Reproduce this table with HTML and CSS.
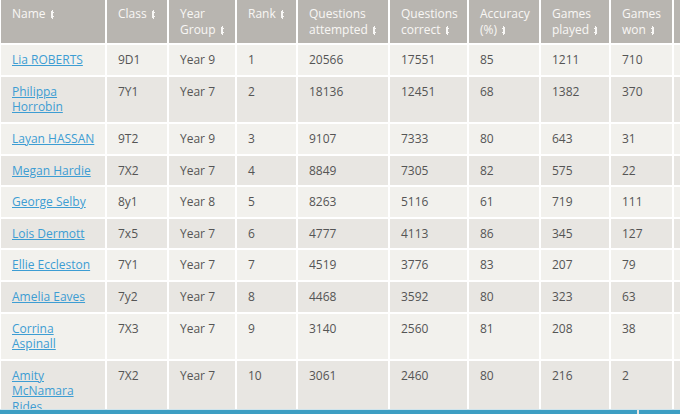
FILE: index.html
```html
<!DOCTYPE html>
<html lang="en">
<head>
<meta charset="utf-8">
<title>Leaderboard</title>
<link rel="stylesheet" href="styles.css">
</head>
<body>
<div class="wrap">
<table class="board">
  <colgroup>
    <col class="c1"><col class="c2"><col class="c3"><col class="c4"><col class="c5">
    <col class="c6"><col class="c7"><col class="c8"><col class="c9"><col class="c10">
  </colgroup>
  <thead>
    <tr>
      <th>Name <span class="sort"></span></th>
      <th>Class <span class="sort"></span></th>
      <th>Year Group <span class="sort"></span></th>
      <th>Rank <span class="sort"></span></th>
      <th>Questions attempted <span class="sort"></span></th>
      <th>Questions correct <span class="sort"></span></th>
      <th>Accuracy (%) <span class="sort"></span></th>
      <th>Games played <span class="sort"></span></th>
      <th>Games won <span class="sort"></span></th>
      <th></th>
    </tr>
  </thead>
  <tbody>
    <tr><td><a href="#">Lia ROBERTS</a></td><td>9D1</td><td>Year 9</td><td>1</td><td>20566</td><td>17551</td><td>85</td><td>1211</td><td>710</td><td></td></tr>
    <tr><td><a href="#">Philippa Horrobin</a></td><td>7Y1</td><td>Year 7</td><td>2</td><td>18136</td><td>12451</td><td>68</td><td>1382</td><td>370</td><td></td></tr>
    <tr><td><a href="#">Layan HASSAN</a></td><td>9T2</td><td>Year 9</td><td>3</td><td>9107</td><td>7333</td><td>80</td><td>643</td><td>31</td><td></td></tr>
    <tr><td><a href="#">Megan Hardie</a></td><td>7X2</td><td>Year 7</td><td>4</td><td>8849</td><td>7305</td><td>82</td><td>575</td><td>22</td><td></td></tr>
    <tr><td><a href="#">George Selby</a></td><td>8y1</td><td>Year 8</td><td>5</td><td>8263</td><td>5116</td><td>61</td><td>719</td><td>111</td><td></td></tr>
    <tr><td><a href="#">Lois Dermott</a></td><td>7x5</td><td>Year 7</td><td>6</td><td>4777</td><td>4113</td><td>86</td><td>345</td><td>127</td><td></td></tr>
    <tr><td><a href="#">Ellie Eccleston</a></td><td>7Y1</td><td>Year 7</td><td>7</td><td>4519</td><td>3776</td><td>83</td><td>207</td><td>79</td><td></td></tr>
    <tr><td><a href="#">Amelia Eaves</a></td><td>7y2</td><td>Year 7</td><td>8</td><td>4468</td><td>3592</td><td>80</td><td>323</td><td>63</td><td></td></tr>
    <tr><td><a href="#">Corrina Aspinall</a></td><td>7X3</td><td>Year 7</td><td>9</td><td>3140</td><td>2560</td><td>81</td><td>208</td><td>38</td><td></td></tr>
    <tr><td><a href="#">Amity McNamara Rides</a></td><td>7X2</td><td>Year 7</td><td>10</td><td>3061</td><td>2460</td><td>80</td><td>216</td><td>2</td><td></td></tr>
  </tbody>
</table>
</div>
<div class="bottombar"><span class="seg seg-a"></span><span class="seg seg-b"></span></div>
</body>
</html>
```

FILE: styles.css
```css
html, body {
  margin: 0;
  padding: 0;
  background: #ffffff;
  overflow: hidden;
  width: 680px;
  height: 414px;
}

body {
  font-family: "Open Sans", "Liberation Sans", sans-serif;
  font-size: 12px;
  color: #555555;
  position: relative;
}

.wrap {
  margin: -2px 0 0 -1px;
}

.board {
  border-collapse: separate;
  border-spacing: 2px;
  table-layout: fixed;
  width: 777px;
}

.c1 { width: 104px; }
.c2 { width: 60px; }
.c3 { width: 66px; }
.c4 { width: 59px; }
.c5 { width: 90px; }
.c6 { width: 77px; }
.c7 { width: 70px; }
.c8 { width: 68px; }
.c9 { width: 61px; }
.c10 { width: 100px; }

.board th {
  background: #b8b5b0;
  color: #f8f7f5;
  font-weight: 400;
  text-align: left;
  vertical-align: top;
  line-height: 15.6px;
  padding: 6px 9px 6px 11px;
  box-sizing: border-box;
}

.board td {
  vertical-align: top;
  line-height: 15.6px;
  padding: 7px 9px 7px 11px;
  box-sizing: border-box;
}

.board tbody tr:nth-child(odd) td { background: #f2f1ed; }
.board tbody tr:nth-child(even) td { background: #e8e6e2; }

.board a {
  color: #3d9dd3;
  text-decoration: underline;
  text-underline-offset: 1px;
}

.sort {
  display: inline-block;
  width: 5px;
  height: 9px;
  margin-left: 1px;
  vertical-align: -1px;
  background:
    linear-gradient(#f8f7f5, #f8f7f5) 1.5px 1px / 2px 7px no-repeat,
    conic-gradient(from 150deg at 50% 0, #f8f7f5 60deg, transparent 0) 0 0 / 5px 3px no-repeat,
    conic-gradient(from -30deg at 50% 100%, #f8f7f5 60deg, transparent 0) 0 6px / 5px 3px no-repeat;
}

.bottombar {
  position: absolute;
  left: 0;
  bottom: 0;
  width: 680px;
  height: 4px;
  display: flex;
  gap: 2px;
  border-top: 1px solid #cfe4ec;
}

.seg {
  display: block;
  height: 4px;
  background: #3d9ec3;
}

.seg-a { width: 637px; }
.seg-b { flex: 1; }
```
